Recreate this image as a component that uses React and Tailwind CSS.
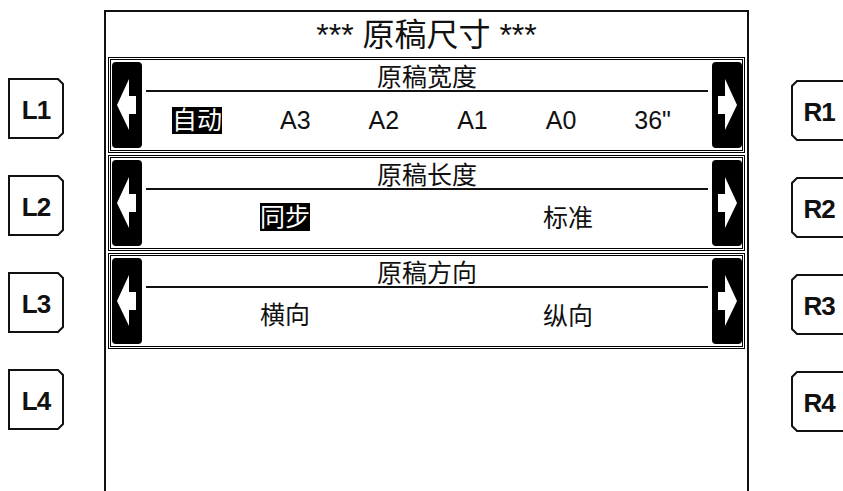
import React from 'react';

const font = { fontFamily: '"Liberation Sans", "Noto Sans CJK SC", sans-serif' };

const SideKey = ({ label, side }) => {
  const points = side === 'left'
    ? '1,1 50,1 55,6 55,55 50,60 1,60'
    : '6,1 55,1 55,60 6,60 1,55 1,6';
  return (
    <div className="relative w-[56px] h-[61px] shrink-0 flex items-center justify-center pt-[3px]">
      <svg className="absolute inset-0" width="56" height="61" viewBox="0 0 56 61">
        <polygon points={points} fill="white" stroke="#111" strokeWidth="2" />
      </svg>
      <span className="relative text-[26px] font-bold leading-none tracking-[-1px] text-[#111]">{label}</span>
    </div>
  );
};

const ArrowBox = ({ dir }) => (
  <div className="w-[30px] h-full shrink-0 bg-black rounded-[4px]">
    <svg width="30" height="86" viewBox="0 0 30 86">
      {dir === 'left' ? (
        <polygon points="5,43 17,17 17,34 24,34 24,52 17,52 17,68" fill="white" />
      ) : (
        <polygon points="25,43 13,17 13,34 6,34 6,52 13,52 13,68" fill="white" />
      )}
    </svg>
  </div>
);

const Value = ({ text, active }) => (
  <span
    className={`text-[25px] leading-[27px] whitespace-nowrap ${active ? 'bg-black text-white' : 'text-[#111]'}`}
  >
    {text}
  </span>
);

const Panel = ({ title, children }) => (
  <div className="h-[96px] border-[3px] border-double border-black pl-[1px] py-[2px] flex">
    <ArrowBox dir="left" />
    <div className="flex-1 mx-[4px] flex flex-col">
      <div className="h-[30px] border-b-2 border-[#111] flex items-end justify-center">
        <span className="text-[25px] leading-[26px] text-[#111]">{title}</span>
      </div>
      {children}
    </div>
    <ArrowBox dir="right" />
  </div>
);

export default function App() {
  return (
    <div className="w-[843px] h-[491px] bg-white overflow-hidden flex" style={font}>
      {/* left soft keys */}
      <div className="w-[104px] shrink-0 flex flex-col pl-2 pt-[78px] gap-[36px]">
        {['L1', 'L2', 'L3', 'L4'].map(k => <SideKey key={k} label={k} side="left" />)}
      </div>

      {/* screen */}
      <div className="w-[645px] h-[490px] mt-[10px] shrink-0 border-2 border-b-0 border-[#111] flex flex-col">
        <div className="h-[45px] flex items-center justify-center">
          <span className="text-[32px] leading-none text-[#111]">*** 原稿尺寸 ***</span>
        </div>
        <div className="mx-[2px] mr-[2px] flex flex-col gap-[2px]">
          <Panel title="原稿宽度">
            <div className="flex-1 flex items-center justify-between pl-[26px] pr-[37px]">
              <Value text="自动" active />
              <Value text="A3" />
              <Value text="A2" />
              <Value text="A1" />
              <Value text="A0" />
              <Value text={'36"'} />
            </div>
          </Panel>
          <Panel title="原稿长度">
            <div className="flex-1 flex items-center pl-[114px]">
              <div className="w-[283px]"><Value text="同步" active /></div>
              <Value text="标准" />
            </div>
          </Panel>
          <Panel title="原稿方向">
            <div className="flex-1 flex items-center pl-[114px]">
              <div className="w-[283px]"><Value text="横向" /></div>
              <Value text="纵向" />
            </div>
          </Panel>
        </div>
      </div>

      {/* right soft keys */}
      <div className="flex-1 flex flex-col pl-[42px] pt-[80px] gap-[36px]">
        {['R1', 'R2', 'R3', 'R4'].map(k => <SideKey key={k} label={k} side="right" />)}
      </div>
    </div>
  );
}
